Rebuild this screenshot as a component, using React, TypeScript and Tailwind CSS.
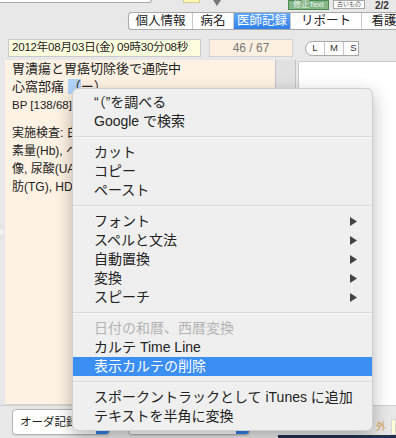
import { ChevronUp, ChevronDown } from 'lucide-react';

type MenuItem = { label: string; sub?: boolean; disabled?: boolean; active?: boolean } | 'sep';

const menuItems: MenuItem[] = [
  { label: '“（”を調べる' },
  { label: 'Google で検索' },
  'sep',
  { label: 'カット' },
  { label: 'コピー' },
  { label: 'ペースト' },
  'sep',
  { label: 'フォント', sub: true },
  { label: 'スペルと文法', sub: true },
  { label: '自動置換', sub: true },
  { label: '変換', sub: true },
  { label: 'スピーチ', sub: true },
  'sep',
  { label: '日付の和暦、西暦変換', disabled: true },
  { label: 'カルテ Time Line' },
  { label: '表示カルテの削除', active: true },
  'sep',
  { label: 'スポークントラックとして iTunes に追加' },
  { label: 'テキストを半角に変換' },
];

const tabs = [
  { label: '個人情報', w: 'w-[64px]' },
  { label: '病名', w: 'w-[41px]' },
  { label: '医師記録', w: 'w-[57px]', active: true },
  { label: 'リポート', w: 'w-[71px]' },
  { label: '看護記録', w: 'w-[70px]' },
];

// only the part of each line left of the menu shows
const recordLines = ['実施検査: 白', '素量(Hb), ヘ', '像, 尿酸(UA', '肪(TG), HD'];

function ContextMenu() {
  return (
    <div className="absolute left-[72px] top-[88px] w-[301px] py-[4px] rounded-[6px] bg-[#efefef] border border-[#cfcfcf] shadow-[0_6px_18px_rgba(0,0,0,0.28)]">
      {menuItems.map((item, i) =>
        item === 'sep' ? (
          <div key={i} className="h-[12px] flex items-center">
            <div className="w-full h-[2px] border-t border-[#d9d9d9] bg-[#f7f7f7]" />
          </div>
        ) : (
          <div
            key={i}
            className={`h-[19px] flex items-center pl-[21px] pr-[15px] text-[14px] leading-[19px] whitespace-nowrap ${
              item.active ? 'bg-[#3b8ef2] text-white' : item.disabled ? 'text-[#b4b4b4]' : 'text-[#222]'
            }`}
          >
            <span className="flex-1">{item.label}</span>
            {item.sub && (
              <svg width="7" height="9" viewBox="0 0 7 9">
                <polygon points="0,0 7,4.5 0,9" fill="#444" />
              </svg>
            )}
          </div>
        )
      )}
    </div>
  );
}

function Popup({ label, width }: { label: string; width: string }) {
  return (
    <div className={`${width} h-[26px] flex rounded-[4px] border border-[#b5b5b5] bg-white overflow-hidden shadow-[0_1px_1px_rgba(0,0,0,0.1)]`}>
      <span className="flex-1 pl-[7px] text-[11.5px] leading-[24px] text-[#222] whitespace-nowrap overflow-hidden">{label}</span>
      <div className="w-[13px] bg-gradient-to-b from-[#5ea4f7] to-[#2b7de6] flex flex-col items-center justify-center text-white">
        <ChevronUp size={7} strokeWidth={3} />
        <ChevronDown size={7} strokeWidth={3} />
      </div>
    </div>
  );
}

export default function App() {
  return (
    <div className="relative w-[396px] h-[438px] overflow-hidden bg-[#e8e8e8] text-[#222] font-['Liberation_Sans','Noto_Sans_CJK_JP',sans-serif] flex flex-col">
      {/* top strip */}
      <div className="h-[11px] flex items-start shrink-0">
        <div className="w-[152px] h-[3px] bg-white border-b border-r border-[#a9a9a9] rounded-br-[4px]" />
        <div className="ml-[31px] w-[17px] h-[3px] bg-[#fff7b5] border-b border-x border-[#d8cf8a]" />
        <svg className="ml-[13px]" width="8" height="6" viewBox="0 0 8 6">
          <polygon points="0,0 8,0 4,6" fill="#777" />
        </svg>
        <div className="ml-[67px] w-[41px] h-[10px] bg-[#86b789] border border-[#4e8b52] text-[8px] leading-[8px] text-[#eef6ee] text-center">
          修正Text
        </div>
        <div className="ml-[4px] w-[32px] h-[9px] bg-white border border-[#a8a8a8] text-[6px] leading-[7px] text-[#555] text-center">
          古いもの
        </div>
        <div className="ml-[10px] mt-[1px] text-[10px] leading-[10px] font-bold text-[#333]">2/2</div>
      </div>

      {/* tabs */}
      <div className="mt-[1px] h-[18px] pl-[128px] flex shrink-0 overflow-hidden">
        <div className="flex shrink-0 border border-r-0 border-[#aaaaaa] rounded-l-[4px] bg-white overflow-hidden shadow-[0_1px_1px_rgba(0,0,0,0.08)]">
          {tabs.map((t) => (
            <div
              key={t.label}
              className={`${t.w} shrink-0 flex items-center justify-center text-[12.5px] leading-[16px] border-r border-[#c9c9c9] whitespace-nowrap ${
                t.active ? 'bg-gradient-to-b from-[#62a8f8] to-[#2f80ea] text-white' : 'text-[#222]'
              }`}
            >
              {t.label}
            </div>
          ))}
        </div>
      </div>

      {/* fields */}
      <div className="mt-[9px] h-[18px] flex pl-[8px] shrink-0">
        <div className="w-[193px] bg-[#fffedf] border border-[#cacaca] pl-[3px] flex items-center text-[11.5px] tracking-[-0.2px] whitespace-nowrap overflow-hidden">
          2012年08月03日(金) 09時30分08秒
        </div>
        <div className="ml-[8px] w-[84px] bg-[#fdf0e1] border border-[#d2d2d2] flex items-center justify-center text-[12px] text-[#777]">
          46 / 67
        </div>
        <div className="ml-[12px] w-[54px] h-[15px] self-center flex overflow-hidden rounded-l-full border border-[#a8a8a8] bg-white text-[9.5px] text-[#333]">
          <div className="w-[19px] shrink-0 flex items-center justify-center border-r border-[#c4c4c4]">L</div>
          <div className="w-[19px] shrink-0 flex items-center justify-center border-r border-[#c4c4c4]">M</div>
          <div className="w-[19px] shrink-0 flex items-center justify-center">S</div>
        </div>
      </div>

      {/* content */}
      <div className="mt-[3px] h-[345px] flex shrink-0">
        <div className="w-[5px] flex flex-col">
          <svg className="mt-[166px]" width="5" height="12" viewBox="0 0 5 12">
            <polygon points="0,0 5,6 0,12" fill="#f7f7f7" stroke="#c9c9c9" strokeWidth="0.5" />
          </svg>
        </div>
        <div className="w-[270px] bg-[#fdf2e3] border-b border-[#d9d2c8] pl-[7px] text-[13px] leading-[18px] whitespace-nowrap overflow-hidden">
          <div>胃潰瘍と胃癌切除後で通院中</div>
          <div>
            心窩部痛 <span className="bg-[#b3d4fb]">（</span>ー）
          </div>
          <div className="text-[11.5px]">BP [138/68]</div>
          <div className="h-[10px]" />
          {recordLines.map((l) => (
            <div key={l} className="text-[12px]">
              {l}
            </div>
          ))}
        </div>
        <div className="w-[21px] bg-[#e1e1e1] border-x border-[#c3c3c3]" />
        <div className="ml-[2px] flex-1 mt-[1px] bg-white border-t border-l border-[#c9c9c9]" />
      </div>

      {/* bottom bar */}
      <div className="flex-1 flex items-start border-t border-[#d0d0d0]">
        <div className="ml-[12px] mt-[3px]">
          <Popup label="オーダ記録" width="w-[98px]" />
        </div>
        <div className="ml-[18px] mt-[3px]">
          <Popup label="定型文で入力" width="w-[122px]" />
        </div>
        <div className="flex-1 h-full flex flex-col">
          <div className="mt-[13px] flex items-center">
            <span className="ml-[126px] text-[10px] leading-[12px] text-[#dba45a]">外</span>
            <div className="ml-[5px] flex-1 h-[16px] bg-[#fffed8] border border-[#d6d6d6]" />
          </div>
          <div className="mt-auto ml-[28px] h-[4px] bg-[#23304d]" />
        </div>
      </div>

      <ContextMenu />
    </div>
  );
}
